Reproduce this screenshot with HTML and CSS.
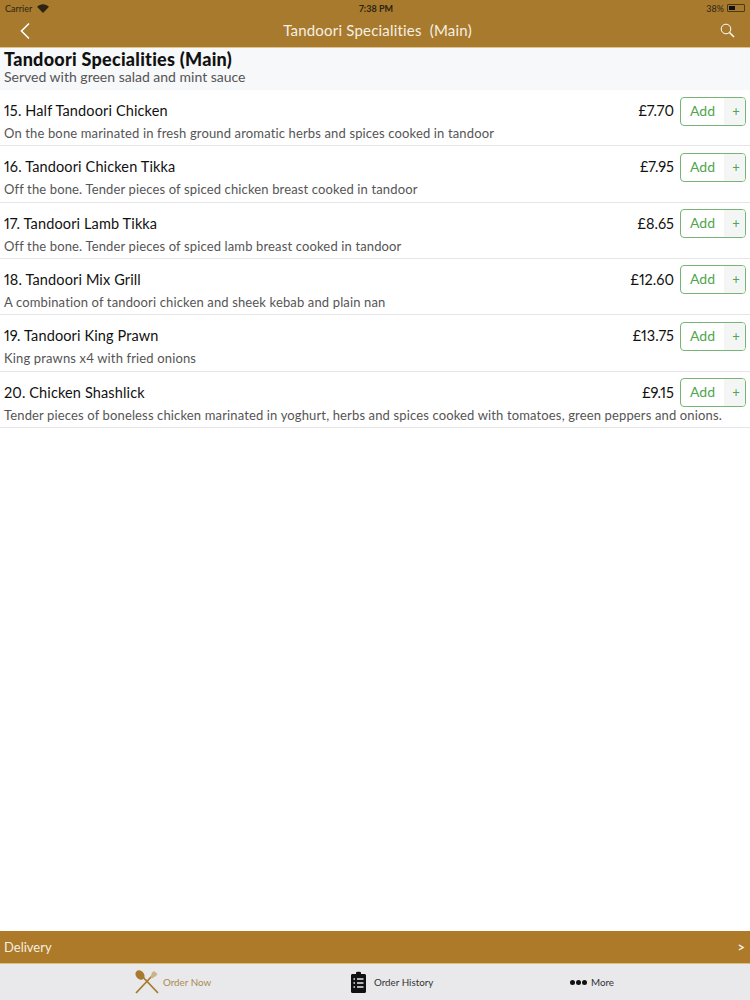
FILE: index.html
```html
<!DOCTYPE html>
<html lang="en">
<head>
    <meta charset="UTF-8">
    <meta name="viewport" content="width=device-width, initial-scale=1.0">
    <title>Tandoori Specialities (Main)</title>
    <link rel="stylesheet" href="styles.css">
</head>
<body>
    <header class="topbar">
        <div class="status">
            <div class="status-left">
                <span>Carrier</span>
                <svg class="wifi" width="12" height="9" viewBox="0 0 12 9"><path d="M6 9 L0 2.8 C3.4 -0.6 8.6 -0.6 12 2.8 Z" fill="#2c2410"/></svg>
            </div>
            <span class="status-time">7:38 PM</span>
            <div class="status-right">
                <span>38%</span>
                <span class="battery"><span class="battery-fill"></span></span>
            </div>
        </div>
        <div class="navbar">
            <svg class="nav-icon" width="12" height="18" viewBox="0 0 12 18"><path d="M10 1.5 L2.5 9 L10 16.5" fill="none" stroke="#fff" stroke-width="1.6"/></svg>
            <div class="nav-title">Tandoori Specialities&nbsp; (Main)</div>
            <svg class="nav-icon" width="15" height="15" viewBox="0 0 15 15"><circle cx="6" cy="6" r="4.8" fill="none" stroke="#fff" stroke-width="1"/><path d="M9.5 9.5 L14 14" stroke="#fff" stroke-width="1.4"/></svg>
        </div>
    </header>

    <main class="menu">
        <div class="section-head">
            <h1>Tandoori Specialities (Main)</h1>
            <p>Served with green salad and mint sauce</p>
        </div>

        <div class="item">
            <div class="item-top">
                <div class="item-name">15. Half Tandoori Chicken</div>
                <div class="item-price">£7.70</div>
                <button class="add"><span class="add-label">Add</span><span class="add-plus">+</span></button>
            </div>
            <div class="item-desc">On the bone marinated in fresh ground aromatic herbs and spices cooked in tandoor</div>
        </div>
        <div class="item">
            <div class="item-top">
                <div class="item-name">16. Tandoori Chicken Tikka</div>
                <div class="item-price">£7.95</div>
                <button class="add"><span class="add-label">Add</span><span class="add-plus">+</span></button>
            </div>
            <div class="item-desc">Off the bone. Tender pieces of spiced chicken breast cooked in tandoor</div>
        </div>
        <div class="item">
            <div class="item-top">
                <div class="item-name">17. Tandoori Lamb Tikka</div>
                <div class="item-price">£8.65</div>
                <button class="add"><span class="add-label">Add</span><span class="add-plus">+</span></button>
            </div>
            <div class="item-desc">Off the bone. Tender pieces of spiced lamb breast cooked in tandoor</div>
        </div>
        <div class="item">
            <div class="item-top">
                <div class="item-name">18. Tandoori Mix Grill</div>
                <div class="item-price">£12.60</div>
                <button class="add"><span class="add-label">Add</span><span class="add-plus">+</span></button>
            </div>
            <div class="item-desc">A combination of tandoori chicken and sheek kebab and plain nan</div>
        </div>
        <div class="item">
            <div class="item-top">
                <div class="item-name">19. Tandoori King Prawn</div>
                <div class="item-price">£13.75</div>
                <button class="add"><span class="add-label">Add</span><span class="add-plus">+</span></button>
            </div>
            <div class="item-desc">King prawns x4 with fried onions</div>
        </div>
        <div class="item">
            <div class="item-top">
                <div class="item-name">20. Chicken Shashlick</div>
                <div class="item-price">£9.15</div>
                <button class="add"><span class="add-label">Add</span><span class="add-plus">+</span></button>
            </div>
            <div class="item-desc">Tender pieces of boneless chicken marinated in yoghurt, herbs and spices cooked with tomatoes, green peppers and onions.</div>
        </div>
    </main>

    <div class="delivery">
        <span>Delivery</span>
        <span class="delivery-arrow">&gt;</span>
    </div>

    <nav class="tabs">
        <div class="tab tab-active">
            <svg width="24" height="24" viewBox="0 0 24 24">
                <path d="M23 23 L6 5" stroke="#a87a2e" stroke-width="1.8"/>
                <ellipse cx="5" cy="5" rx="4" ry="5.2" transform="rotate(-42 5 5)" fill="#a87a2e"/>
                <path d="M1 23 L17 6" stroke="#a87a2e" stroke-width="1.8"/>
                <path d="M15.5 7 L17 2.5 L19 1 L22.5 4 L21 6 L17 8.5 Z" fill="#c9b48c"/>
            </svg>
            <span>Order Now</span>
        </div>
        <div class="tab tab-history">
            <svg width="15" height="22" viewBox="0 0 15 22">
                <path d="M1.5 3 H5 V1.5 C5 0.5 10 0.5 10 1.5 V3 H13.5 C14.4 3 15 3.6 15 4.5 V20.5 C15 21.4 14.4 22 13.5 22 H1.5 C0.6 22 0 21.4 0 20.5 V4.5 C0 3.6 0.6 3 1.5 3 Z" fill="#111"/>
                <path d="M2.5 8 H4 M6 8 H12.5 M2.5 12 H4 M6 12 H12.5 M2.5 16 H4 M6 16 H12.5" stroke="#e9e9eb" stroke-width="1.3"/>
            </svg>
            <span>Order History</span>
        </div>
        <div class="tab">
            <span class="dots"><i></i><i></i><i></i></span>
            <span>More</span>
        </div>
    </nav>
</body>
</html>
```

FILE: styles.css
```css
* {
    box-sizing: border-box;
}

body {
    margin: 0;
    height: 100vh;
    display: flex;
    flex-direction: column;
    background: #fff;
    color: #111;
    font-family: "Lato", "Liberation Sans", sans-serif;
    font-variant-ligatures: none;
    font-variant-numeric: proportional-nums;
}

.topbar {
    height: 48px;
    background-color: #a87a2e;
    border-bottom: 1px solid #e0c48f;
}

.status {
    height: 15px;
    padding: 1px 5px 0;
    display: flex;
    justify-content: space-between;
    align-items: center;
    font-size: 9px;
    color: #2c2410;
}

.status-left,
.status-right {
    width: 120px;
    display: flex;
    align-items: center;
    gap: 5px;
}

.status-right {
    justify-content: flex-end;
    gap: 3px;
}

.status-time {
    font-weight: 700;
    margin-left: 2px;
}

.battery {
    width: 18px;
    height: 8px;
    border: 1px solid #4a3a18;
    border-radius: 1px;
    padding: 1px;
}

.battery-fill {
    display: block;
    width: 6px;
    height: 100%;
    background: #111;
}

.navbar {
    height: 31px;
    padding: 0 15px 0 19px;
    display: flex;
    justify-content: space-between;
    align-items: center;
}

.nav-title {
    color: #f6efe0;
    font-size: 15px;
    letter-spacing: 0.2px;
    margin-left: 4px;
    padding-bottom: 2px;
}

.menu {
    flex: 1;
}

.section-head {
    height: 42px;
    padding: 1px 4px 0;
    background: #f7f8fa;
}

.section-head h1 {
    margin: 0;
    font-size: 18px;
    line-height: 20px;
    font-weight: 900;
    letter-spacing: 0.26px;
}

.section-head p {
    margin: 0;
    font-size: 14px;
    line-height: 15px;
    color: #555;
}

.item {
    height: 56.33px;
    padding: 6px 4px 0;
    border-bottom: 1px solid #e6e6e8;
}

.item-top {
    height: 30px;
    display: flex;
    align-items: center;
}

.item-name {
    flex: 1;
    font-size: 14.5px;
    letter-spacing: 0.13px;
    padding-bottom: 1px;
}

.item-price {
    font-size: 14.5px;
    margin-right: 6px;
    padding-bottom: 1px;
}

.add {
    width: 66px;
    height: 29px;
    padding: 0;
    display: flex;
    background: #fff;
    border: 1px solid #76b576;
    border-radius: 4px;
    color: #4ea64e;
    font-family: inherit;
    overflow: hidden;
}

.add-label {
    flex: 1;
    font-size: 14px;
    line-height: 26px;
}

.add-plus {
    width: 21px;
    padding-left: 3px;
    font-size: 13px;
    line-height: 27px;
    background: #f4f6f6;
}

.item-desc {
    font-size: 13px;
    line-height: 16px;
    letter-spacing: 0.14px;
    color: #555;
    margin-top: -1px;
    white-space: nowrap;
}

.delivery {
    height: 33px;
    padding: 0 5px 0 4px;
    display: flex;
    justify-content: space-between;
    align-items: center;
    background: #ac7a28;
    border-bottom: 1px solid #d8bd84;
    color: #f6efe0;
    font-size: 13px;
}

.delivery-arrow {
    font-weight: 700;
}

.tabs {
    height: 36px;
    padding-left: 135px;
    display: grid;
    grid-template-columns: 216px 219px 1fr;
    background: #e9e9eb;
}

.tab {
    display: flex;
    align-items: center;
    gap: 4px;
    font-size: 9.8px;
    color: #333;
}

.tab-active {
    color: #a88b52;
}

.tab-history {
    gap: 8px;
}

.dots {
    display: flex;
    gap: 1px;
}

.dots i {
    width: 5px;
    height: 5px;
    border-radius: 50%;
    background: #111;
}
```
